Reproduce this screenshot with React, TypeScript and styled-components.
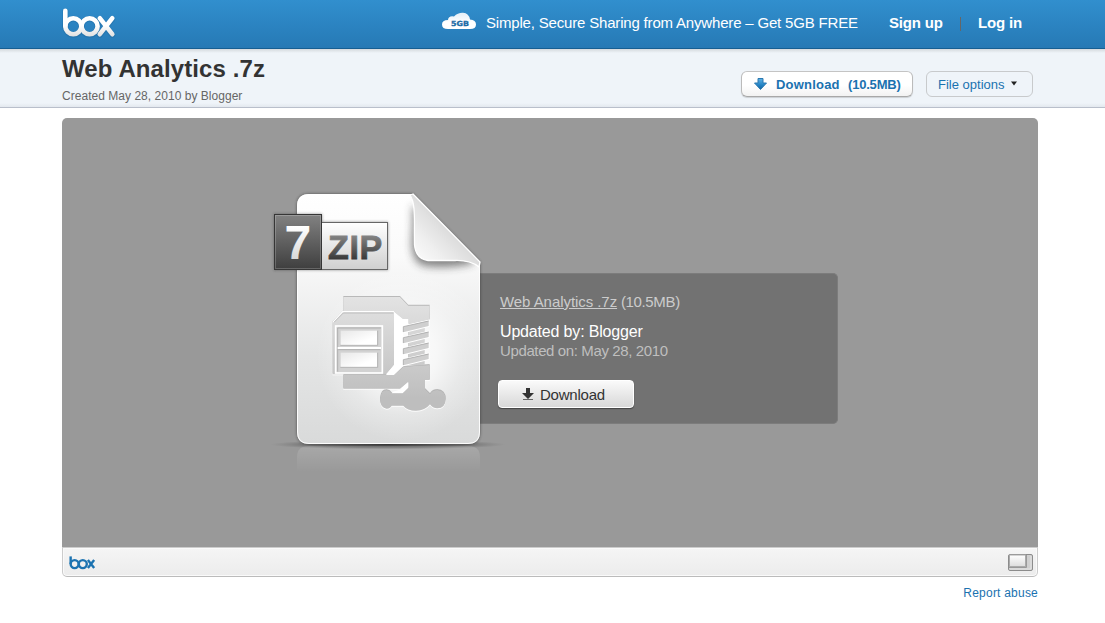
import React from "react";
import styled, { createGlobalStyle } from "styled-components";

const GlobalStyle = createGlobalStyle`
  * { box-sizing: border-box; }
  body {
    margin: 0;
    background: #fff;
    font-family: "Liberation Sans", Arial, sans-serif;
    color: #333;
  }
  a { color: inherit; text-decoration: none; }
`;

const Page = styled.div`
  min-height: 623px;
  overflow: hidden;
`;

const Header = styled.header`
  height: 49px;
  padding: 0 83px 0 60px;
  display: flex;
  align-items: flex-start;
  background: linear-gradient(#318fce, #2679b5);
  border-bottom: 1px solid #165e92;
  color: #fff;
`;

const Spacer = styled.div`
  flex: 1;
`;

const Tagline = styled.div`
  width: 372px;
  margin: 14px 31px 0 9px;
  font-size: 15px;
  line-height: 18px;
  white-space: nowrap;
  letter-spacing: -0.18px;
`;

const HeaderLink = styled.a<{ $width: number }>`
  width: ${(p) => p.$width}px;
  margin-top: 14px;
  font-size: 15px;
  font-weight: bold;
  line-height: 18px;
  white-space: nowrap;
  letter-spacing: -0.17px;
`;

const Divider = styled.div`
  width: 1px;
  height: 14px;
  margin: 17px 17px 0;
  background: #666;
`;

const TitleBar = styled.section`
  height: 59px;
  padding: 0 72px 0 62px;
  display: flex;
  background: linear-gradient(#d4d9dd, #eff4f9 4px, #eff4f9 54px, #e3e8ee);
  border-bottom: 1px solid #b9bfcb;
`;

const TitleBlock = styled.div`
  flex: 1;
`;

const Title = styled.h1`
  margin: 6px 0 0;
  font-size: 24px;
  line-height: 28px;
  white-space: nowrap;
  letter-spacing: 0.1px;
`;

const Created = styled.div`
  margin-top: 6px;
  font-size: 12px;
  line-height: 14px;
  color: #666;
  letter-spacing: 0.03px;
`;

const BarButton = styled.a<{ $primary?: boolean; $width: number }>`
  width: ${(p) => p.$width}px;
  height: 26px;
  margin: 22px 0 0 13px;
  padding-left: 11px;
  display: flex;
  align-items: center;
  white-space: pre;
  font-size: 13px;
  color: #1a72b0;
  border: 1px solid #c8cacc;
  border-radius: 6px;
  ${(p) =>
    p.$primary &&
    `
    font-weight: bold;
    background: linear-gradient(#fff, #fff 55%, #f2f2f2);
    border-color: #c4c4c4 #bbb #a8a8a8;
    box-shadow: 0 1px 1px rgba(0, 0, 0, 0.15);
  `}
`;

const ButtonText = styled.span<{ $width?: number; $spacing?: number }>`
  width: ${(p) => (p.$width ? `${p.$width}px` : "auto")};
  letter-spacing: ${(p) => p.$spacing ?? 0}px;
`;

const Content = styled.main`
  width: 976px;
  margin: 10px 0 0 62px;
`;

const Stage = styled.div`
  height: 429px;
  padding: 67px 0 0 200px;
  display: flex;
  align-items: flex-start;
  background: #999;
  border-radius: 5px 5px 0 0;
`;

const FileArt = styled.svg`
  flex: none;
  overflow: visible;
  position: relative;
`;

const InfoCard = styled.div`
  width: 358px;
  height: 151px;
  margin-top: 88px;
  padding: 19px 0 0 18px;
  background: #727272;
  border: 1px solid #7c7c7c;
  border-left: 0;
  border-radius: 0 5px 5px 0;
`;

const InfoLine = styled.div<{ $size: number; $color: string; $gap?: number; $spacing?: number }>`
  height: ${(p) => p.$size + 4}px;
  margin: ${(p) => p.$gap ?? 0}px 0 0 2px;
  font-size: ${(p) => p.$size}px;
  line-height: ${(p) => p.$size + 3}px;
  color: ${(p) => p.$color};
  white-space: nowrap;
  letter-spacing: ${(p) => p.$spacing ?? 0}px;
`;

const FileLink = styled.a`
  text-decoration: underline;
  letter-spacing: -0.06px;
`;

const DownloadButton = styled.a`
  width: 136px;
  height: 28px;
  margin-top: 19px;
  padding-left: 23px;
  display: flex;
  align-items: center;
  gap: 6px;
  font-size: 15px;
  letter-spacing: -0.22px;
  color: #333;
  background: linear-gradient(#fafafa, #d8d8d8);
  border: 1px solid #fff;
  border-radius: 4px;
  box-shadow: 0 1px 1px #444;
`;

const ViewerBar = styled.div`
  height: 30px;
  padding: 0 4px 0 5px;
  display: flex;
  align-items: center;
  justify-content: space-between;
  background: linear-gradient(#f5f5f5, #ececec);
  border: 1px solid #ccc;
  border-bottom-color: #bbb;
  border-radius: 0 0 5px 5px;
  box-shadow: inset 0 0 0 1px #fafafa;
`;

const Footer = styled.footer`
  margin-top: 8px;
  font-size: 12px;
  line-height: 16px;
  text-align: right;
  color: #1a72b0;
  letter-spacing: 0.22px;
`;

const LogoStrokes = () => (
  <>
    <path d="M65.300 10.800V26" />
    <circle cx="73.300" cy="26.200" r="8" />
    <circle cx="89.600" cy="26.200" r="8" />
    <path d="M99.800 18.200L112.300 34.200M112.300 18.200L99.800 34.200" />
  </>
);

const HeaderLogo = () => (
  <svg width="60" height="44" viewBox="60 0 60 44" fill="none" strokeLinecap="round">
    <defs>
      <linearGradient id="logo" gradientUnits="userSpaceOnUse" x1="0" y1="8" x2="0" y2="37">
        <stop offset="0" stopColor="#fff" />
        <stop offset=".6" stopColor="#fff" />
        <stop offset="1" stopColor="#dedede" />
      </linearGradient>
    </defs>
    <g stroke="#1f6599" strokeOpacity=".35" strokeWidth="6" transform="translate(0 .6)">
      <LogoStrokes />
    </g>
    <g stroke="url(#logo)" strokeWidth="4.600">
      <LogoStrokes />
    </g>
  </svg>
);

const Cloud = () => (
  <svg width="35" height="31" viewBox="442 0 35 31">
    <defs>
      <linearGradient id="cloud" x1="0" y1="0" x2="0" y2="1">
        <stop offset="0" stopColor="#e4eff7" />
        <stop offset=".6" stopColor="#fff" />
      </linearGradient>
    </defs>
    <path
      d="M448 29Q442 29 442 24.500Q442 20 448 20Q448.500 15.500 454 16.500Q458 12.500 463 12.800Q469 13.300 470 19.500Q476 20 476 24.500Q476 29 470 29Z"
      fill="url(#cloud)"
    />
    <text x="451" y="26" fontSize="7" fontWeight="bold" fontFamily="DejaVu Sans, sans-serif" fill="#1d6ca6" stroke="#1d6ca6" strokeWidth=".3" textLength="18" lengthAdjust="spacingAndGlyphs">
      5GB
    </text>
  </svg>
);

const ZipClamp = () => (
  <g transform="translate(320 285) scale(.33333)">
    <g fill="url(#metal)" filter="url(#emboss)">
      <path d="M70 36H240L265 62H329V104L265 118V102H248L222 80H70Z" />
      <path d="M70 270H198L222 270L250 245L329 240V285H315V312L330 327Q337 315 352 315Q377 317 377 343Q376 370 352 370Q338 370 330 358Q315 377 288 377Q262 377 250 362H215Q210 371 200 371Q181 369 180 343Q182 315 200 315Q210 316 215 325H248L265 308V290L240 311H70Z" />
      <path d="M38 112L68 80H222V240L198 268H38Z" />
      <path d="M265 125H313V240H265Z" />
    </g>
    <path d="M38 112L68 80H222" fill="none" stroke="#fff" strokeWidth="4" />
    <path d="M42 112L70 84H220" fill="none" stroke="#aaa" strokeWidth="2" />
    <path d="M222 81L248 102H265V120L250 126V243L222 270H198L222 240Z" fill="#fff" />
    <path d="M265 292V308L248 325H215L218 320L240 314Z" fill="#fff" />
    {[125, 158, 191, 224].map((y) => (
      <path key={y} d={`M250 ${y}L326 ${y - 18}V${y - 2}L250 ${y + 17}Z`} fill="#cfcfcf" stroke="#fff" strokeWidth="6" paintOrder="stroke" />
    ))}
    {[125, 158, 191, 224].map((y) => (
      <path key={y} d={`M250 ${y + 16}V${y}L326 ${y - 17}`} fill="none" stroke="#a9a9a9" strokeWidth="2.5" />
    ))}
    <rect x="47" y="123" width="140" height="141" fill="#d2d2d2" stroke="#fff" strokeWidth="5" />
    <path d="M53 260V129H183" fill="none" stroke="#aaa" strokeWidth="2.5" />
    <path d="M53 189H183" stroke="#fff" strokeWidth="6" />
    <path d="M55 194H181" stroke="#aaa" strokeWidth="2.500" />
    {[137, 203].map((y) => (
      <g key={y}>
        <rect x="62" y={y} width="110" height="44" fill="url(#drawer)" />
        <path d={`M61 ${y + 44}H173V${y}`} fill="none" stroke="#aaa" strokeWidth="2.5" />
      </g>
    ))}
  </g>
);

const SevenZipFile = () => (
  <FileArt width="218" height="295" viewBox="262 185 218 295">
    <defs>
      <linearGradient id="paper" x1="0" y1="0" x2="0" y2="1">
        <stop offset="0" stopColor="#fff" />
        <stop offset=".25" stopColor="#fafafa" />
        <stop offset=".65" stopColor="#e4e5e5" />
        <stop offset="1" stopColor="#d9dada" />
      </linearGradient>
      <radialGradient id="glow">
        <stop offset="0" stopColor="#fff" />
        <stop offset=".4" stopColor="#fff" stopOpacity=".7" />
        <stop offset=".7" stopColor="#fff" stopOpacity=".25" />
        <stop offset="1" stopColor="#fff" stopOpacity="0" />
      </radialGradient>
      <linearGradient id="fold" gradientUnits="userSpaceOnUse" x1="414" y1="255" x2="446" y2="224">
        <stop offset="0" stopColor="#fafafa" />
        <stop offset=".4" stopColor="#efefef" />
        <stop offset="1" stopColor="#dadada" />
      </linearGradient>
      <linearGradient id="metal" gradientUnits="userSpaceOnUse" x1="0" y1="36" x2="0" y2="340">
        <stop offset="0" stopColor="#e3e3e3" />
        <stop offset="1" stopColor="#bebebe" />
      </linearGradient>
      <linearGradient id="drawer" x1="0" y1="0" x2="1" y2="1">
        <stop offset="0" stopColor="#e8e8e8" />
        <stop offset=".7" stopColor="#fff" />
      </linearGradient>
      <linearGradient id="seven" x1="0" y1="0" x2="0" y2="1">
        <stop offset="0" stopColor="#828282" />
        <stop offset="1" stopColor="#3e3e3e" />
      </linearGradient>
      <linearGradient id="zip" x1="0" y1="0" x2="0" y2="1">
        <stop offset="0" stopColor="#fff" />
        <stop offset="1" stopColor="#cfcfcf" />
      </linearGradient>
      <linearGradient id="zipText" gradientUnits="userSpaceOnUse" x1="0" y1="235" x2="0" y2="259">
        <stop offset="0" stopColor="#858585" />
        <stop offset="1" stopColor="#3a3a3a" />
      </linearGradient>
      <linearGradient id="sevenText" gradientUnits="userSpaceOnUse" x1="0" y1="226" x2="0" y2="259">
        <stop offset="0" stopColor="#fff" />
        <stop offset="1" stopColor="#d8d8d8" />
      </linearGradient>
      <linearGradient id="mirror" x1="0" y1="0" x2="0" y2="1">
        <stop offset="0" stopColor="#fff" stopOpacity=".15" />
        <stop offset="1" stopColor="#fff" stopOpacity="0" />
      </linearGradient>
      <radialGradient id="ground">
        <stop offset="0" stopColor="#222" stopOpacity=".8" />
        <stop offset=".65" stopColor="#333" stopOpacity=".4" />
        <stop offset="1" stopColor="#555" stopOpacity="0" />
      </radialGradient>
      <filter id="soft" x="-20%" y="-20%" width="140%" height="140%">
        <feGaussianBlur stdDeviation="1.6" />
      </filter>
      <filter id="foldShade" x="-50%" y="-50%" width="200%" height="200%">
        <feGaussianBlur stdDeviation="4.500" />
      </filter>
      <filter id="emboss">
        <feDropShadow dx="0" dy="-2" stdDeviation=".6" floodColor="#999" />
        <feDropShadow dx="0" dy="2.500" stdDeviation=".6" floodColor="#fff" />
      </filter>
      <clipPath id="sheet">
        <path d="M309 194H413L480 262V432Q480 444 468 444H309Q297 444 297 432V206Q297 194 309 194Z" />
      </clipPath>
    </defs>
    <ellipse cx="388" cy="444.500" rx="118" ry="5" fill="url(#ground)" />
    <path d="M297 472V457Q297 446 309 446H468Q480 446 480 457V472Z" fill="url(#mirror)" />
    <path d="M309 194H413L480 262V432Q480 444 468 444H309Q297 444 297 432V206Q297 194 309 194Z" fill="#333" opacity=".75" filter="url(#soft)" />
    <path d="M309 194H413L480 262V432Q480 444 468 444H309Q297 444 297 432V206Q297 194 309 194Z" fill="url(#paper)" />
    <g clipPath="url(#sheet)">
      <ellipse cx="402" cy="355" rx="86" ry="86" fill="url(#glow)" />
      <path d="M412 205Q414 215 412 240Q411 263 425 266Q450 269 474 263L470 250Z" fill="#333" opacity=".6" filter="url(#foldShade)" />
    </g>
    <path d="M309 194.500H413L479.500 262V432Q479.500 443.500 468 443.500H309Q297.500 443.500 297.500 432V206Q297.500 194.500 309 194.500Z" fill="none" stroke="#fff" strokeOpacity=".9" />
    <path d="M410 195C416 204 414 220 414.500 245Q416 259 428 260.500H455Q470 260 479 267L480 262L413 194Z" fill="url(#fold)" stroke="#fff" strokeWidth="1.3" strokeLinejoin="round" />
    <ZipClamp />
    <path d="M274 214H322V222H388V270H274Z" fill="#222" opacity=".5" filter="url(#soft)" />
    <rect x="321.500" y="222.500" width="66" height="47" fill="url(#zip)" stroke="#666" />
    <rect x="274.500" y="214.500" width="47" height="55" fill="url(#seven)" stroke="#363636" />
    <rect x="275.500" y="215.500" width="45" height="53" fill="none" stroke="#fff" strokeOpacity=".2" />
    <text x="284.500" y="259" fontFamily="Liberation Sans, sans-serif" fontWeight="bold" fontSize="48" fill="url(#sevenText)">
      7
    </text>
    <text x="328 349.500 359.500" y="259" fontFamily="Liberation Sans, sans-serif" fontWeight="bold" fontSize="34" fill="url(#zipText)" stroke="url(#zipText)" strokeWidth=".8">
      ZIP
    </text>
  </FileArt>
);

const BlueArrow = () => (
  <svg width="23" height="14" viewBox="0 0 23 14">
    <defs>
      <linearGradient id="arrow" x1="0" y1="0" x2="0" y2="1">
        <stop offset="0" stopColor="#5fb2e6" />
        <stop offset=".6" stopColor="#2383c4" />
        <stop offset="1" stopColor="#14639d" />
      </linearGradient>
    </defs>
    <path d="M5 1.500H10V6H13.500L7.500 12.500L1.500 6H5Z" fill="url(#arrow)" stroke="#2a78b0" strokeLinejoin="round" />
  </svg>
);

const DarkArrow = () => (
  <svg width="12" height="13" viewBox="0 0 12 13">
    <path d="M4 0H8V5H12L6 11L0 5H4Z" fill="#333" />
    <path d="M1 11.500H11" stroke="#666" />
  </svg>
);

const Caret = () => (
  <svg width="14" height="6" viewBox="0 0 14 6">
    <path d="M7 .5H13L10 4.500Z" fill="#222" />
  </svg>
);

const SmallLogo = () => (
  <svg width="30" height="17" viewBox="60 6 60 34" fill="none" stroke="#1c73b1" strokeWidth="4.800">
    <LogoStrokes />
  </svg>
);

const PanelIcon = () => (
  <svg width="25" height="17" viewBox="0 0 25 17">
    <defs>
      <linearGradient id="panel" x1="0" y1="0" x2="0" y2="1">
        <stop offset="0" stopColor="#fff" />
        <stop offset="1" stopColor="#ddd" />
      </linearGradient>
    </defs>
    <rect x=".5" y=".5" width="24" height="16" rx="1.500" fill="#d0d0d0" stroke="#8c8c8c" />
    <rect x="1.500" y="1" width="16" height="11.500" fill="url(#panel)" stroke="#aaa" />
    <path d="M1 13.500H18.500V1" fill="none" stroke="#999" />
    <path d="M1.500 15H23V2" fill="none" stroke="#e4e4e4" />
  </svg>
);

export default function App() {
  return (
    <Page>
      <GlobalStyle />
      <Header>
        <HeaderLogo />
        <Spacer />
        <Cloud />
        <Tagline>Simple, Secure Sharing from Anywhere – Get 5GB FREE</Tagline>
        <HeaderLink href="#" $width={54}>Sign up</HeaderLink>
        <Divider />
        <HeaderLink href="#" $width={44}>Log in</HeaderLink>
      </Header>
      <TitleBar>
        <TitleBlock>
          <Title>Web Analytics .7z</Title>
          <Created>Created May 28, 2010 by Blogger</Created>
        </TitleBlock>
        <BarButton href="#" $primary $width={172}>
          <BlueArrow />
          <ButtonText $width={72} $spacing={0.2}>Download</ButtonText>
          <ButtonText $spacing={-0.2}>(10.5MB)</ButtonText>
        </BarButton>
        <BarButton href="#" $width={107}>
          <ButtonText>File options</ButtonText>
          <Caret />
        </BarButton>
      </TitleBar>
      <Content>
        <Stage>
          <SevenZipFile />
          <InfoCard>
            <InfoLine $size={15} $color="#ccc" $spacing={-0.35}>
              <FileLink href="#">Web Analytics .7z</FileLink> (10.5MB)
            </InfoLine>
            <InfoLine $size={16} $color="#fff" $gap={10} $spacing={-0.17}>Updated by: Blogger</InfoLine>
            <InfoLine $size={15} $color="#bfbfbf" $spacing={-0.38}>Updated on: May 28, 2010</InfoLine>
            <DownloadButton href="#">
              <DarkArrow />
              <span>Download</span>
            </DownloadButton>
          </InfoCard>
        </Stage>
        <ViewerBar>
          <SmallLogo />
          <PanelIcon />
        </ViewerBar>
        <Footer>
          <a href="#">Report abuse</a>
        </Footer>
      </Content>
    </Page>
  );
}
